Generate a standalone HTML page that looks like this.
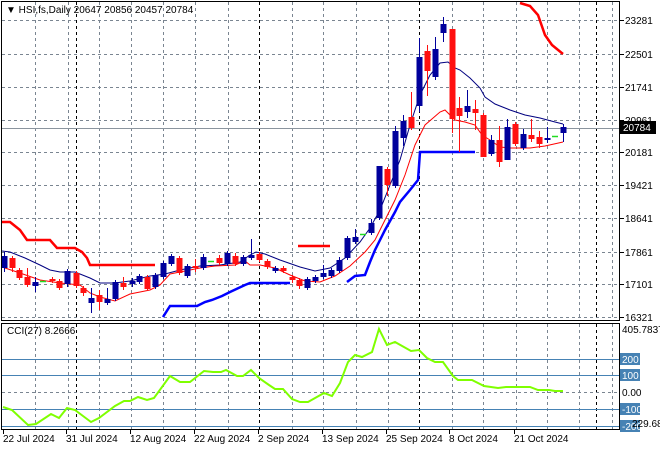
<!DOCTYPE html>
<html><head><meta charset="utf-8"><style>
html,body{margin:0;padding:0;background:#fff;width:660px;height:450px;overflow:hidden}
svg{display:block;font-family:"Liberation Sans","DejaVu Sans",sans-serif;font-size:10px}
</style></head><body>
<svg id="s" width="660" height="450" viewBox="0 0 660 450" xmlns="http://www.w3.org/2000/svg">
<rect width="660" height="450" fill="#fff"/>
<g id="grid" stroke="#7a8591" stroke-width="1" stroke-dasharray="3,3" fill="none"></g>
<g id="lines" fill="none"></g>
<g id="candles"></g>
<g id="cci" fill="none"></g>
<rect x="1.5" y="1.5" width="618" height="319" fill="none" stroke="#000"/>
<rect x="1.5" y="323.5" width="618" height="106" fill="none" stroke="#000"/>
<g id="txt" fill="#000"></g>
<text x="6" y="13">▼ HSI,fs,Daily  20647 20856 20457 20784</text>
<text x="7" y="334">CCI(27) 8.2666</text>
</svg>
<script>
const NS="http://www.w3.org/2000/svg";
function el(p,t,a,txt){const e=document.createElementNS(NS,t);for(const k in a)e.setAttribute(k,a[k]);if(txt!==undefined)e.textContent=txt;document.getElementById(p).appendChild(e);return e;}
const hy=[20,54,87,120,152,185,218,252,284,317];
hy.forEach(y=>el('grid','line',{x1:2,x2:619,y1:y+.5,y2:y+.5}));
const vx=[35,68,99,131,163,195,228,292,323,356,388,452,483,516,547,579,612];
vx.forEach(x=>{el('grid','line',{x1:x+.5,x2:x+.5,y1:2,y2:320});el('grid','line',{x1:x+.5,x2:x+.5,y1:324,y2:429});});
[76,259,419,596].forEach(x=>{el('grid','line',{x1:x+.5,x2:x+.5,y1:2,y2:320,stroke:'#000'});el('grid','line',{x1:x+.5,x2:x+.5,y1:324,y2:429,stroke:'#000'});});
el('grid','line',{x1:2,x2:619,y1:128.5,y2:128.5,stroke:'#8a949e','stroke-dasharray':'none'});
el('grid','line',{x1:2,x2:619,y1:392.5,y2:392.5});
[359,375,409,426].forEach(y=>el('grid','line',{x1:2,x2:619,y1:y+.5,y2:y+.5,stroke:'#4682b4','stroke-dasharray':'none'}));
function pl(g,pts,c,w){el(g,'polyline',{points:pts.map(p=>p.join(',')).join(' '),stroke:c,'stroke-width':w,fill:'none'});}
pl('lines',[[2,251],[10,252],[25,258],[40,265],[50,270],[60,272],[75,272],[90,278],[100,283],[115,283],[130,281],[150,276],[165,274],[180,270],[200,266],[220,265],[240,262],[250,255],[256,252],[265,254],[280,260],[300,267],[315,271],[330,268],[345,258],[360,242],[370,228],[380,210],[390,185],[400,160],[410,125],[420,95],[430,75],[440,63],[448,62],[455,68],[460,70],[470,78],[480,88],[485,97],[495,104],[510,110],[525,115],[540,118],[555,122],[563,124]],'#000080',1);
pl('lines',[[2,267],[20,273],[40,280],[60,283],[80,285],[90,293],[100,297],[115,301],[130,294],[150,290],[160,285],[170,274],[185,271],[200,268],[215,266],[235,265],[245,261],[250,265],[260,265],[275,268],[290,275],[305,281],[320,282],[335,276],[350,266],[365,252],[375,240],[385,220],[395,200],[405,175],[415,145],[425,125],[440,112],[445,110],[455,120],[465,122],[475,125],[482,135],[490,140],[500,147],[510,148],[530,148],[545,146],[563,142]],'#ff0000',1);
pl('lines',[[163,317],[170,306],[197,306],[205,302],[212,300],[222,296],[230,292],[245,285],[250,283],[290,283]],'#0000ff',2.5);
pl('lines',[[347,282],[355,276],[365,275],[370,262],[375,250],[385,230],[395,212],[400,202],[410,190],[418,180],[420,152],[475,152]],'#0000ff',2.5);
pl('lines',[[2,222],[10,222],[20,230],[27,240],[50,240],[57,248],[75,248],[82,252],[87,258],[90,265],[155,265]],'#ff0000',2.5);
pl('lines',[[298,246],[330,246]],'#ff0000',2.5);
pl('lines',[[520,3],[530,6],[538,15],[545,35],[552,45],[563,54]],'#ff0000',2.5);
// candles: x, color(b/r/g), bodyTop, bodyBot, wickTop, wickBot
const C=[[4,'b',256,268,252,272],[12,'r',258,268,256,272],[19,'r',270,278,268,280],[27,'r',277,285,268,287],[35,'b',282,286,277,292],[43,'g',281,281,281,281],[52,'r',279,281,277,283],[59,'r',281,288,279,290],[67,'b',271,284,269,287],[76,'r',273,286,271,288],[83,'r',288,293,286,296],[91,'b',298,303,288,313],[99,'r',295,302,290,310],[107,'b',299,303,288,305],[115,'b',282,299,280,301],[123,'r',283,287,277,290],[132,'b',281,284,278,287],[139,'b',276,282,274,284],[147,'r',277,289,275,291],[155,'b',275,287,273,289],[163,'b',263,277,261,279],[171,'b',256,264,254,266],[179,'r',258,273,256,275],[187,'b',266,276,264,278],[195,'r',266,268,259,272],[203,'b',257,268,254,270],[211,'g',261,261,261,261],[219,'r',258,263,255,265],[227,'b',253,264,251,266],[235,'r',256,264,253,266],[243,'b',257,264,255,266],[251,'b',255,258,239,260],[259,'r',254,260,252,262],[267,'r',261,267,259,269],[275,'b',268,271,266,273],[283,'r',268,271,266,273],[292,'r',277,280,275,283],[299,'r',280,286,278,289],[307,'b',279,288,277,290],[315,'b',277,281,275,283],[323,'b',273,277,265,279],[331,'b',270,276,268,278],[339,'b',260,271,257,273],[347,'b',238,258,236,260],[355,'b',237,242,229,244],[363,'g',234,234,234,234],[371,'b',223,233,219,235],[379,'b',166,218,166,220],[387,'r',169,185,167,196],[395,'b',131,186,126,188],[403,'b',121,138,115,146],[411,'r',117,128,92,130],[419,'b',57,106,38,112],[427,'r',51,71,45,96],[435,'b',49,77,37,80],[443,'b',24,33,17,42],[452,'r',29,119,29,133],[459,'r',108,116,97,152],[467,'b',106,112,90,118],[475,'r',109,113,100,130],[483,'r',115,157,113,157],[491,'b',140,154,135,156],[499,'r',140,162,126,167],[507,'b',127,160,119,160],[515,'r',124,144,122,146],[523,'b',134,148,129,150],[531,'r',135,139,119,142],[539,'r',137,144,131,148],[547,'b',138,140,127,143],[555,'g',136,136,136,136],[563,'b',127,133,124,142]];
const col={b:'#00009c',r:'#ff1010',g:'#00cc00'};
C.forEach(c=>{const [x,t,bt,bb,wt,wb]=c;const k=col[t];
 if(t==='g'){el('candles','line',{x1:x-3,x2:x+3,y1:bt+.5,y2:bt+.5,stroke:'#22dd22','stroke-width':1.5});return;}
 el('candles','line',{x1:x+.5,x2:x+.5,y1:wt,y2:wb,stroke:k,'stroke-width':1});
 el('candles','rect',{x:x-2.5,y:bt,width:6,height:Math.max(2,bb-bt),fill:k});});
pl('cci',[[3,407],[12,410],[28,425],[36,424],[51,414],[59,418],[67,408],[75,410],[91,422],[99,418],[115,406],[124,401],[130,401],[138,397],[147,400],[154,398],[170,376],[180,382],[190,382],[204,371],[213,372],[221,372],[226,370],[237,376],[243,376],[251,370],[259,378],[269,385],[275,389],[283,389],[292,399],[300,402],[308,402],[324,393],[332,396],[340,383],[348,362],[355,355],[362,357],[372,352],[379,329],[387,345],[395,342],[411,351],[419,350],[427,358],[435,362],[443,362],[453,376],[458,380],[472,380],[484,386],[498,388],[506,387],[530,387],[538,390],[549,390],[555,391],[563,391]],'#7fff00',2);
// axis labels
[['23281',20],['22501',54],['21741',87],['20961',120],['20181',152],['19421',185],['18641',218],['17861',252],['17101',284],['16321',317]].forEach(a=>{el('txt','line',{x1:620,x2:624,y1:a[1]+.5,y2:a[1]+.5,stroke:'#000'});el('txt','text',{x:625,y:a[1]+4},a[0]);});
el('txt','rect',{x:620,y:121,width:36,height:13,fill:'#000'});
el('txt','text',{x:623,y:131,fill:'#fff'},'20784');
el('txt','text',{x:622,y:333},'405.7837');
[['200',359],['100',375],['-100',409],['-200',426]].forEach(a=>{el('txt','rect',{x:620,y:a[1]-6,width:20,height:12,fill:'#4682b4'});el('txt','text',{x:622,y:a[1]+4,fill:'#fff'},a[0]);});
el('txt','text',{x:622,y:396},'0.00');
el('txt','text',{x:632,y:427},'229.681');
[['22 Jul 2024',3],['31 Jul 2024',66],['12 Aug 2024',130],['22 Aug 2024',194],['2 Sep 2024',258],['13 Sep 2024',322],['25 Sep 2024',386],['8 Oct 2024',449],['21 Oct 2024',514]].forEach(a=>{el('txt','line',{x1:a[1]+.5,x2:a[1]+.5,y1:430,y2:434,stroke:'#000'});el('txt','text',{x:a[1],y:442},a[0]);});
</script>
</body></html>
